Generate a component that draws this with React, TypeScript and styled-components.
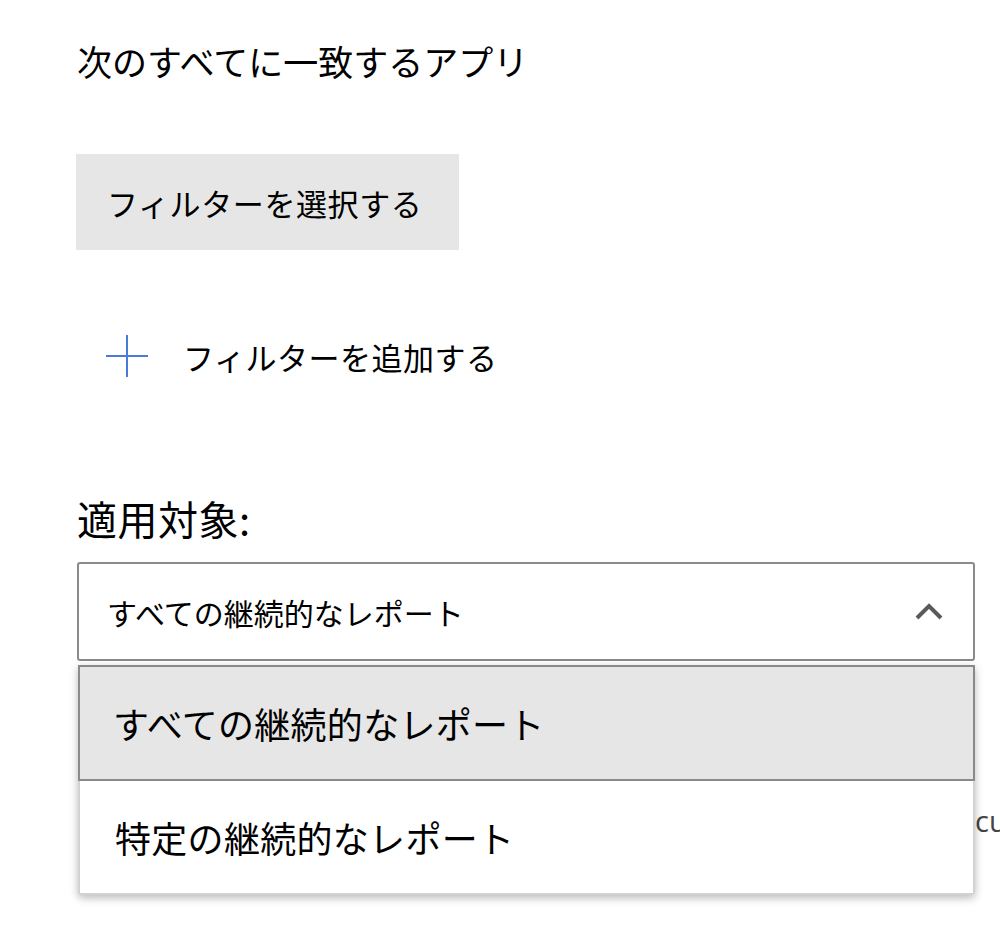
import React from "react";
import styled, { createGlobalStyle } from "styled-components";

const Global = createGlobalStyle`
  html, body { margin: 0; padding: 0; background: #fff; height: 100%; overflow: hidden; }
  body { font-family: "Noto Sans CJK JP", "Noto Sans", sans-serif; color: #000; }
`;

const Page = styled.div`
  width: 898px;
  margin-left: 77px;
  padding-top: 38px;
  display: flex;
  flex-direction: column;
`;

const Title = styled.h2`
  margin: 0;
  font-size: 35px;
  font-weight: 400;
  line-height: 46px;
  letter-spacing: 0;
`;

const SelectButton = styled.button`
  margin-top: 70px;
  margin-left: -1px;
  width: 383px;
  height: 96px;
  border: none;
  background: #e6e6e6;
  padding: 0 0 0 31px;
  text-align: left;
  font-family: inherit;
  font-size: 31px;
  color: #000;
  letter-spacing: 0.6px;
`;

const AddRow = styled.div`
  margin-top: 76px;
  height: 60px;
  display: flex;
  align-items: center;
  padding-left: 29px;
  gap: 35px;
  font-size: 31px;
  letter-spacing: 0.5px;
`;

const Label = styled.div`
  margin-top: 109px;
  font-size: 40px;
  line-height: 46px;
  letter-spacing: 0.5px;
`;

const SelectWrap = styled.div`
  position: relative;
  margin-top: 21px;
`;

const SelectBox = styled.div`
  box-sizing: border-box;
  height: 99px;
  border: 2px solid #8a8a8a;
  border-radius: 3px;
  display: flex;
  align-items: center;
  justify-content: space-between;
  padding: 0 30px 0 28px;
  font-size: 30px;
  letter-spacing: 0;
`;

const Menu = styled.div`
  position: absolute;
  top: calc(100% + 4px);
  left: 1px;
  right: 0;
  box-sizing: border-box;
  background: #fff;
  border: 2px solid #d2d2d2;
  border-top: none;
  border-radius: 0 0 4px 4px;
  box-shadow: 0 3px 8px rgba(0, 0, 0, 0.28);
  display: flex;
  flex-direction: column;
  z-index: 2;
`;

const Option = styled.div<{ $active?: boolean }>`
  box-sizing: border-box;
  height: ${(p) => (p.$active ? "116px" : "112px")};
  display: flex;
  align-items: center;
  padding-left: ${(p) => (p.$active ? "33px" : "35px")};
  margin: ${(p) => (p.$active ? "0 -2px" : "0")};
  font-size: 36px;
  letter-spacing: 0.3px;
  background: ${(p) => (p.$active ? "#e6e6e6" : "#fff")};
  border: ${(p) => (p.$active ? "2px solid #8a8a8a" : "none")};
`;

const Behind = styled.div`
  margin-top: 140px;
  padding-left: 898px;
  white-space: nowrap;
  font-family: "Open Sans", "Noto Sans", sans-serif;
  font-size: 29px;
  color: #444;
  line-height: 40px;
`;

const Plus = () => (
  <svg width="42" height="42" viewBox="0 0 42 42">
    <path d="M21 0v42M0 21h42" stroke="#4a7bd6" strokeWidth="2" fill="none" />
  </svg>
);

const Chevron = () => (
  <svg width="28" height="18" viewBox="0 0 28 18">
    <path d="M2 15L14 3L26 15" stroke="#5a5a5a" strokeWidth="4" fill="none" />
  </svg>
);

export default function App() {
  return (
    <>
      <Global />
      <Page>
        <Title>次のすべてに一致するアプリ</Title>
        <div>
          <SelectButton>フィルターを選択する</SelectButton>
        </div>
        <AddRow>
          <Plus />
          <span>フィルターを追加する</span>
        </AddRow>
        <Label>適用対象:</Label>
        <SelectWrap>
          <SelectBox>
            <span>すべての継続的なレポート</span>
            <Chevron />
          </SelectBox>
          <Menu>
            <Option $active>すべての継続的なレポート</Option>
            <Option>特定の継続的なレポート</Option>
          </Menu>
        </SelectWrap>
        <Behind>cu</Behind>
      </Page>
    </>
  );
}
